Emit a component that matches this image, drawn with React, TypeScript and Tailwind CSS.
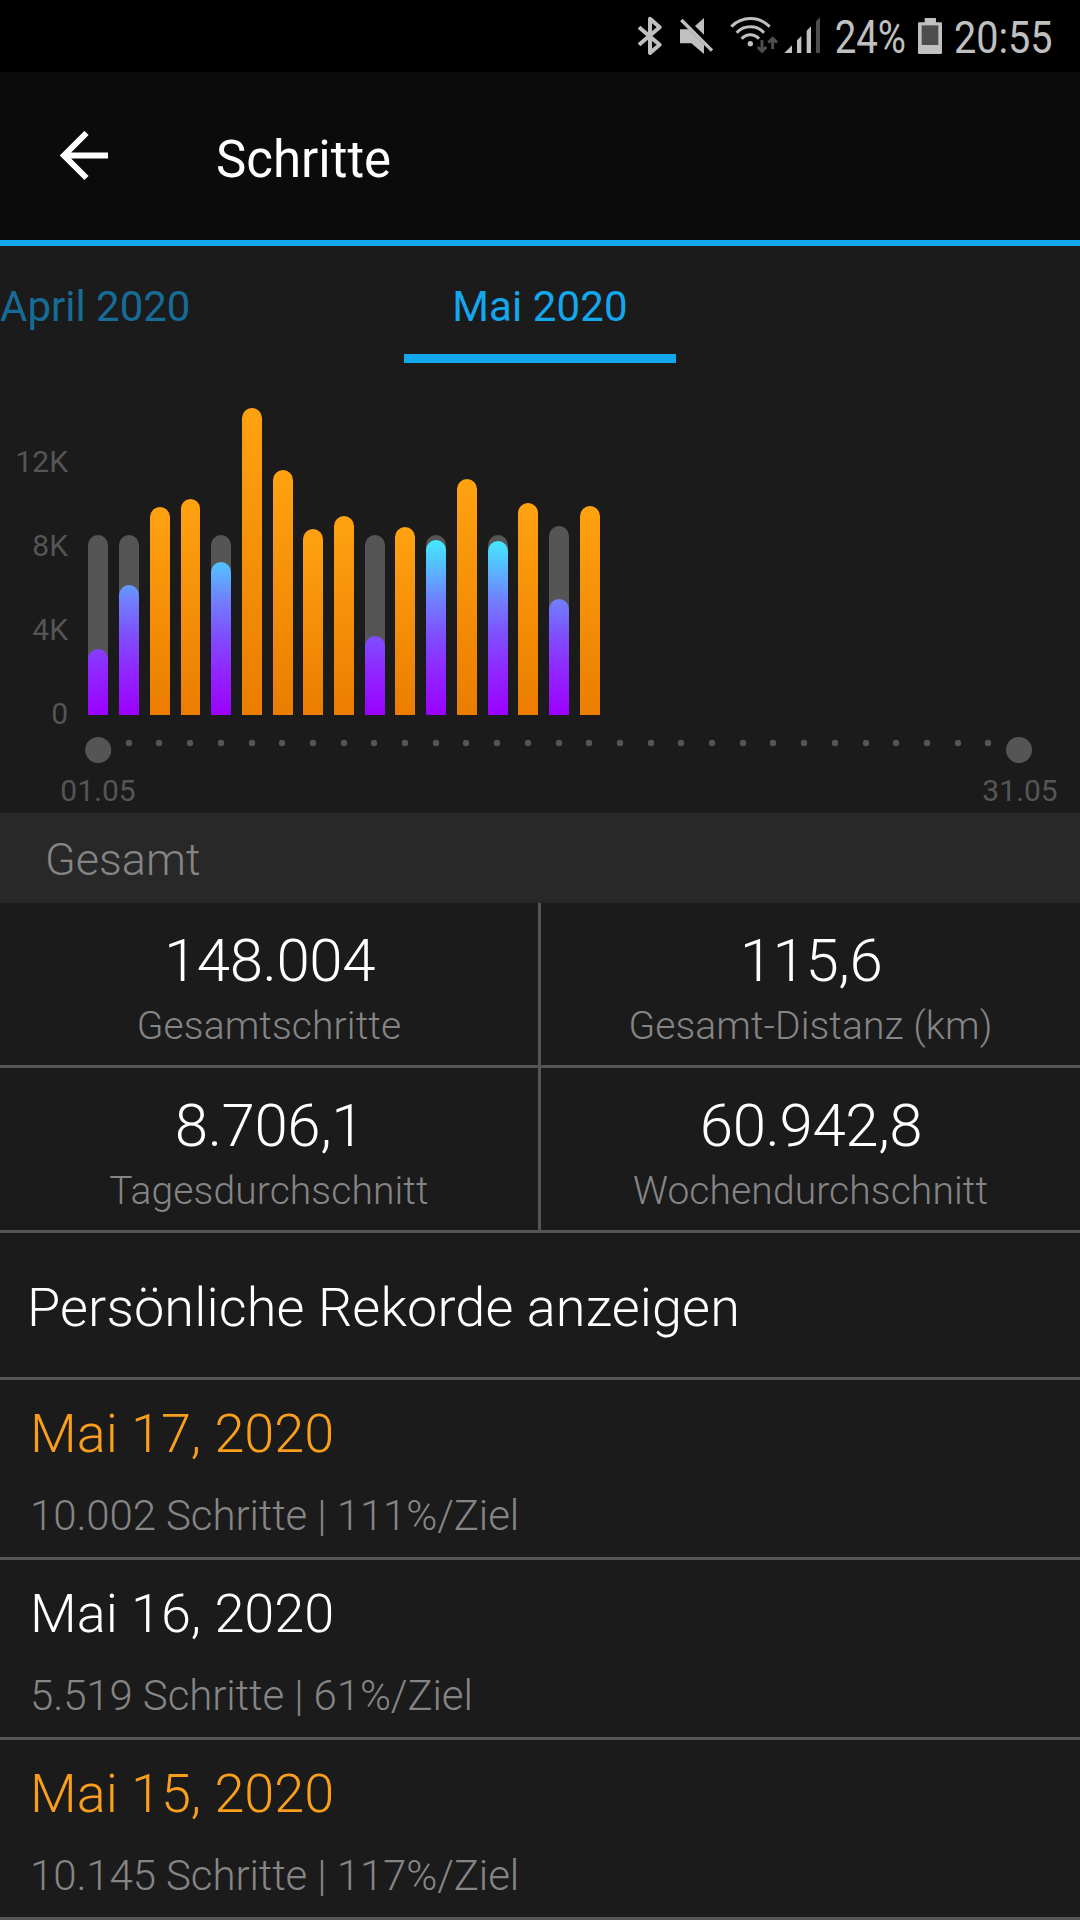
import React from "react";

interface Day {
  x: number;
  width: number;
  height: number;
  goal?: number;
}

interface Total {
  value: string;
  label: string;
}

interface Entry {
  date: string;
  details: string;
  reached: boolean;
}

// goal is only set on days where the bar stayed below it
const days: Day[] = [
  { x: 88, width: 20, height: 66, goal: 180 },
  { x: 119, width: 20, height: 130, goal: 180 },
  { x: 150, width: 20, height: 208 },
  { x: 181, width: 19, height: 216 },
  { x: 211, width: 20, height: 153, goal: 180 },
  { x: 242, width: 20, height: 307 },
  { x: 273, width: 20, height: 245 },
  { x: 303, width: 20, height: 186 },
  { x: 334, width: 20, height: 199 },
  { x: 365, width: 20, height: 79, goal: 180 },
  { x: 395, width: 20, height: 188 },
  { x: 426, width: 20, height: 175, goal: 180 },
  { x: 457, width: 20, height: 236 },
  { x: 488, width: 20, height: 174, goal: 180 },
  { x: 518, width: 20, height: 212 },
  { x: 549, width: 20, height: 116, goal: 189 },
  { x: 580, width: 20, height: 209 },
];

const axis = [
  { label: "12K", y: 92 },
  { label: "8K", y: 176 },
  { label: "4K", y: 260 },
  { label: "0", y: 344 },
];

const totals: Total[] = [
  { value: "148.004", label: "Gesamtschritte" },
  { value: "115,6", label: "Gesamt-Distanz (km)" },
  { value: "8.706,1", label: "Tagesdurchschnitt" },
  { value: "60.942,8", label: "Wochendurchschnitt" },
];

const entries: Entry[] = [
  { date: "Mai 17, 2020", details: "10.002 Schritte | 111%/Ziel", reached: true },
  { date: "Mai 16, 2020", details: "5.519 Schritte | 61%/Ziel", reached: false },
  { date: "Mai 15, 2020", details: "10.145 Schritte | 117%/Ziel", reached: true },
];

const BASE = 335;

function barPath(x: number, width: number, height: number): string {
  const r = width / 2;
  return `M${x} ${BASE}V${BASE - height + r}a${r} ${r} 0 0 1 ${width} 0V${BASE}Z`;
}

function StatusBar() {
  return (
    <div className="flex h-[72px] items-start bg-black pl-[620px] text-[#c0c0c0]">
      <svg className="h-[72px] w-[330px] shrink-0" viewBox="0 0 990 216" fill="none">
        {/* bluetooth */}
        <path
          d="M57 82L119 134L90 159V56L119 82L57 134"
          stroke="#c0c0c0"
          strokeWidth="12"
          strokeLinejoin="round"
        />
        {/* muted speaker */}
        <path
          d="M180 88H206L252 134V162L214 130H180ZM225 78L252 54V104Z"
          fill="#c0c0c0"
        />
        <path d="M184 60L276 152" stroke="#c0c0c0" strokeWidth="10" />
        {/* wifi */}
        <g stroke="#c0c0c0" strokeWidth="9">
          <path d="M334 80A80 80 0 0 1 449 80" />
          <path d="M350 98A56 56 0 0 1 432 98" />
          <path d="M365 116A34 34 0 0 1 417 116" />
        </g>
        <circle cx="391" cy="131" r="8" fill="#c0c0c0" />
        <path
          d="M426 120V154M413 141L426 154L439 141M458 147V115M445 128L458 115L471 128"
          stroke="#4d4d4d"
          strokeWidth="9"
        />
        {/* signal */}
        <path
          d="M493 159L516 136V159ZM531 159V121L544 108V159ZM560 159V92L573 79V159Z"
          fill="#c0c0c0"
        />
        <path d="M588 159V64L600 52V159Z" fill="#4d4d4d" />
        {/* battery */}
        <path
          d="M914 56Q914 54 916 54H946Q948 54 948 56V67H963Q966 67 966 70V158Q966 162 962 162H898Q894 162 894 158V70Q894 67 897 67H914Z"
          fill="#c0c0c0"
        />
        <path d="M905 76H955V135H905Z" fill="#4d4d4d" />
        <text
          x="644"
          y="159"
          fontSize="136"
          fill="#c0c0c0"
          textLength="214"
          lengthAdjust="spacingAndGlyphs"
        >
          24%
        </text>
      </svg>
      <span className="mt-[11px] ml-[4px] origin-left scale-x-[0.88] text-[45px] leading-[54px]">
        20:55
      </span>
    </div>
  );
}

function Chart() {
  return (
    <svg className="block h-[433px] w-full" viewBox="0 0 1080 433">
      <defs>
        <linearGradient id="reached" x1="0" y1="0" x2="0" y2="1">
          <stop offset="0" stopColor="#ffa211" />
          <stop offset="1" stopColor="#eb7d00" />
        </linearGradient>
        {/* spans the full goal height, so short bars only show the purple end */}
        <linearGradient
          id="missed"
          gradientUnits="userSpaceOnUse"
          x1="0"
          y1={BASE}
          x2="0"
          y2="155"
        >
          <stop offset="0" stopColor="#9b00ff" />
          <stop offset="0.25" stopColor="#8f28ff" />
          <stop offset="0.44" stopColor="#7f4eff" />
          <stop offset="0.64" stopColor="#7080ff" />
          <stop offset="0.85" stopColor="#52c4ff" />
          <stop offset="1" stopColor="#42f2ff" />
        </linearGradient>
      </defs>
      <g fill="#555555" fontSize="30">
        {axis.map((tick) => (
          <text key={tick.label} x="68" y={tick.y} textAnchor="end">
            {tick.label}
          </text>
        ))}
        <text x="98" y="421" textAnchor="middle">
          01.05
        </text>
        <text x="1020" y="421" textAnchor="middle">
          31.05
        </text>
      </g>
      {days.map((day) => (
        <g key={day.x}>
          {day.goal && <path d={barPath(day.x, day.width, day.goal)} fill="#555555" />}
          <path
            d={barPath(day.x, day.width, day.height)}
            fill={day.goal ? "url(#missed)" : "url(#reached)"}
          />
        </g>
      ))}
      <g fill="#555555">
        <circle cx="98.2" cy="370" r="13" />
        {Array.from({ length: 29 }, (_, i) => (
          <circle key={i} cx={Math.round(98 + 30.7 * (i + 1))} cy="363" r="3.2" />
        ))}
        <circle cx="1019" cy="370" r="13" />
      </g>
    </svg>
  );
}

function App() {
  return (
    <div className="h-[1920px] w-[1080px] overflow-hidden bg-[#1b1b1b] font-['Roboto',sans-serif] text-white">
      <StatusBar />
      <header className="flex h-[174px] items-center border-b-[6px] border-[#13a7ee] bg-[#0b0b0b]">
        <svg className="ml-[60px] h-[50px] w-[49px]" viewBox="0 0 49 50" fill="none">
          <path d="M26.5 2L4 24.5L26.5 47M3 24.5H48" stroke="#ffffff" strokeWidth="6" />
        </svg>
        <h1 className="ml-[107px] pt-[7px] text-[51px] leading-[60px]">Schritte</h1>
      </header>

      <nav className="flex h-[134px] items-start text-[42px] leading-[50px] whitespace-nowrap text-[#13a7ee]">
        <span className="w-[404px] pt-[36px] text-[#166c96]">April 2020</span>
        <span className="h-[117px] w-[272px] border-b-[9px] border-[#13a7ee] pt-[36px] text-center tracking-[0.1px]">
          Mai 2020
        </span>
      </nav>

      <Chart />

      <div className="h-[90px] bg-[#282828] pt-[21px] pl-[45px] text-[45px] leading-[52px] font-light text-[#858585]">
        Gesamt
      </div>

      <div className="grid grid-cols-[541px_539px] text-center font-light">
        {totals.map((total, i) => (
          <div
            key={total.label}
            className={
              i % 2 === 0
                ? "h-[165px] border-r-[3px] border-b-[3px] border-[#555555]"
                : "h-[165px] border-b-[3px] border-[#555555]"
            }
          >
            <p className="pt-[23px] pl-px text-[60px] leading-[70px] tracking-[-0.4px]">
              {total.value}
            </p>
            <p className="pt-[7px] text-[39px] leading-[46px] tracking-[0.1px] text-[#858585]">
              {total.label}
            </p>
          </div>
        ))}
      </div>

      <div className="h-[147px] border-b-[3px] border-[#555555] pt-[43px] pl-[27px] text-[54px] leading-[64px] font-light tracking-[0.14px]">
        Persönliche Rekorde anzeigen
      </div>

      {entries.map((entry) => (
        <div
          key={entry.date}
          className="h-[180px] border-b-[3px] border-[#555555] pl-[30px] font-light"
        >
          <p
            className={
              entry.reached
                ? "pt-[22px] text-[54px] leading-[64px] text-[#fa9f1b]"
                : "pt-[22px] text-[54px] leading-[64px]"
            }
          >
            {entry.date}
          </p>
          <p className="pt-[25px] text-[42px] leading-[50px] tracking-[-0.1px] text-[#858585]">
            {entry.details}
          </p>
        </div>
      ))}
    </div>
  );
}

export default App;
